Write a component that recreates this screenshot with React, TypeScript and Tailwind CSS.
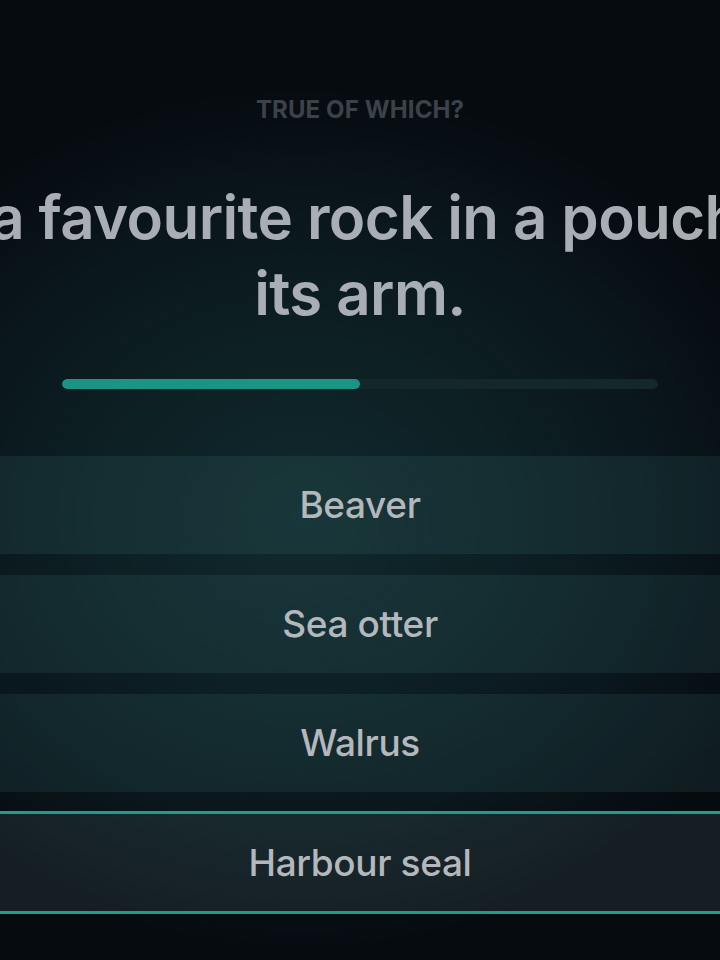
import React from "react";

const options = [
  { label: "Beaver", selected: false },
  { label: "Sea otter", selected: false },
  { label: "Walrus", selected: false },
  { label: "Harbour seal", selected: true },
];

export default function App() {
  return (
    <div
      className="relative w-[720px] h-[960px] overflow-hidden bg-[#05090e] bg-[radial-gradient(ellipse_70%_45%_at_42%_54%,#11292d_0%,#0d2024_40%,#0a171c_70%,#060b10_100%)] font-['Inter','Liberation_Sans',sans-serif]"
    >
      <div className="flex flex-col items-center pt-[95px]">
        <div className="h-[30px] text-[24px] leading-[30px] font-bold tracking-[0.005em] text-[#3b4349] whitespace-nowrap">
          TRUE OF WHICH?
        </div>
        <div className="mt-[54px] flex flex-col items-center text-[60px] leading-[76px] font-semibold text-[#a9adb4] tracking-[-0.01em]">
          <span className="block whitespace-nowrap">Keeps a favourite rock in a pouch under</span>
          <span className="block whitespace-nowrap">its arm.</span>
        </div>
        <div className="mt-[48px] w-[596px] h-[10px] rounded-full bg-[#14272b] overflow-hidden">
          <div className="h-full w-[298px] rounded-full bg-[#1a9483]" />
        </div>
      </div>
      <div className="mt-[67px] flex flex-col gap-[21px]">
        {options.map((o) =>
          o.selected ? (
            <div
              key={o.label}
              className="-mt-[2px] h-[103px] border-y-[3px] border-[#1f9c8a] bg-[rgba(130,170,175,0.12)] flex items-center justify-center text-[37px] font-medium tracking-[-0.01em] text-[#b4b8bc]"
            >
              {o.label}
            </div>
          ) : (
            <div
              key={o.label}
              className="h-[98px] bg-[rgba(80,160,160,0.12)] flex items-center justify-center text-[37px] font-medium tracking-[-0.01em] text-[#b4b8bc]"
            >
              {o.label}
            </div>
          )
        )}
      </div>
    </div>
  );
}
